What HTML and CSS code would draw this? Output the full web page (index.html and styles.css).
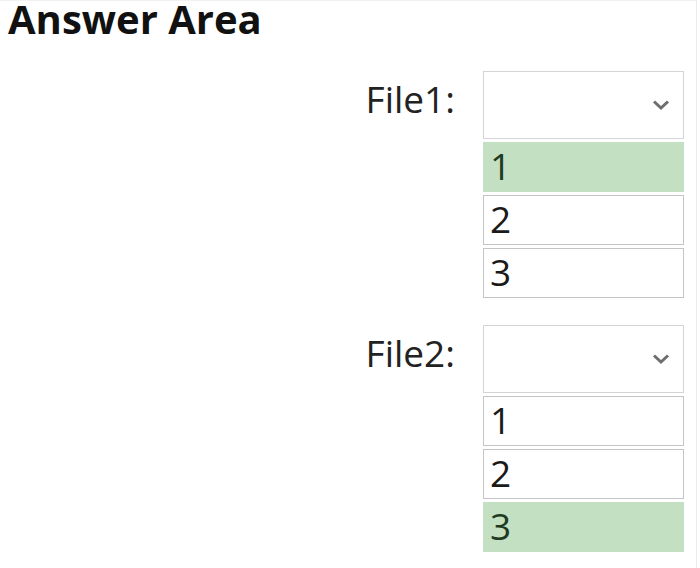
FILE: index.html
```html
<!DOCTYPE html>
<html lang="en">
<head>
<meta charset="utf-8">
<title>Answer Area</title>
<link rel="stylesheet" href="styles.css">
</head>
<body>
<div class="page">
  <h1 class="title">Answer Area</h1>
  <div class="rows">
    <div class="row">
      <span class="label">File1:</span>
      <div class="select">
        <div class="box">
          <svg class="chevron" width="20" height="12" viewBox="0 0 20 12"><path d="M3 2.5 L10 9 L17 2.5" fill="none" stroke="#6e6e6e" stroke-width="3"/></svg>
        </div>
        <ul class="options">
          <li class="option selected">1</li>
          <li class="option">2</li>
          <li class="option">3</li>
        </ul>
      </div>
    </div>
    <div class="row">
      <span class="label">File2:</span>
      <div class="select">
        <div class="box">
          <svg class="chevron" width="20" height="12" viewBox="0 0 20 12"><path d="M3 2.5 L10 9 L17 2.5" fill="none" stroke="#6e6e6e" stroke-width="3"/></svg>
        </div>
        <ul class="options">
          <li class="option">1</li>
          <li class="option">2</li>
          <li class="option selected">3</li>
        </ul>
      </div>
    </div>
  </div>
</div>
</body>
</html>
```

FILE: styles.css
```css
html, body {
  margin: 0;
  padding: 0;
  background: #ffffff;
}

.page {
  width: 697px;
  height: 568px;
  box-sizing: border-box;
  border-top: 1px solid #f2f2f2;
  border-right: 1px solid #ececec;
  font-family: "Open Sans", "Noto Sans", sans-serif;
  color: #1e1e1e;
}

.title {
  margin: 0;
  padding: 0 0 0 8px;
  font-size: 40px;
  font-weight: 700;
  line-height: 36px;
  color: #111111;
}

.rows {
  display: flex;
  flex-direction: column;
  gap: 27px;
  margin-top: 34px;
}

.row {
  display: grid;
  grid-template-columns: 455px 201px;
  column-gap: 28px;
  align-items: start;
}

.label {
  justify-self: end;
  font-size: 37px;
  line-height: 48px;
  padding-top: 4px;
  color: #222222;
}

.select {
  display: flex;
  flex-direction: column;
}

.box {
  height: 66px;
  border: 1px solid #d4d4d4;
  display: flex;
  align-items: center;
  justify-content: flex-end;
  padding-right: 12px;
  margin-bottom: 3px;
}

.chevron {
  display: block;
}

.options {
  list-style: none;
  margin: 0;
  padding: 0;
  display: flex;
  flex-direction: column;
  gap: 3px;
}

.option {
  height: 48px;
  border: 1px solid #c4c4c4;
  padding-left: 6px;
  font-size: 37px;
  line-height: 46px;
  color: #1a1a1a;
}

.option.selected {
  background: #c3e0c2;
  border-color: #c3e0c2;
  color: #1f3a22;
}
```
